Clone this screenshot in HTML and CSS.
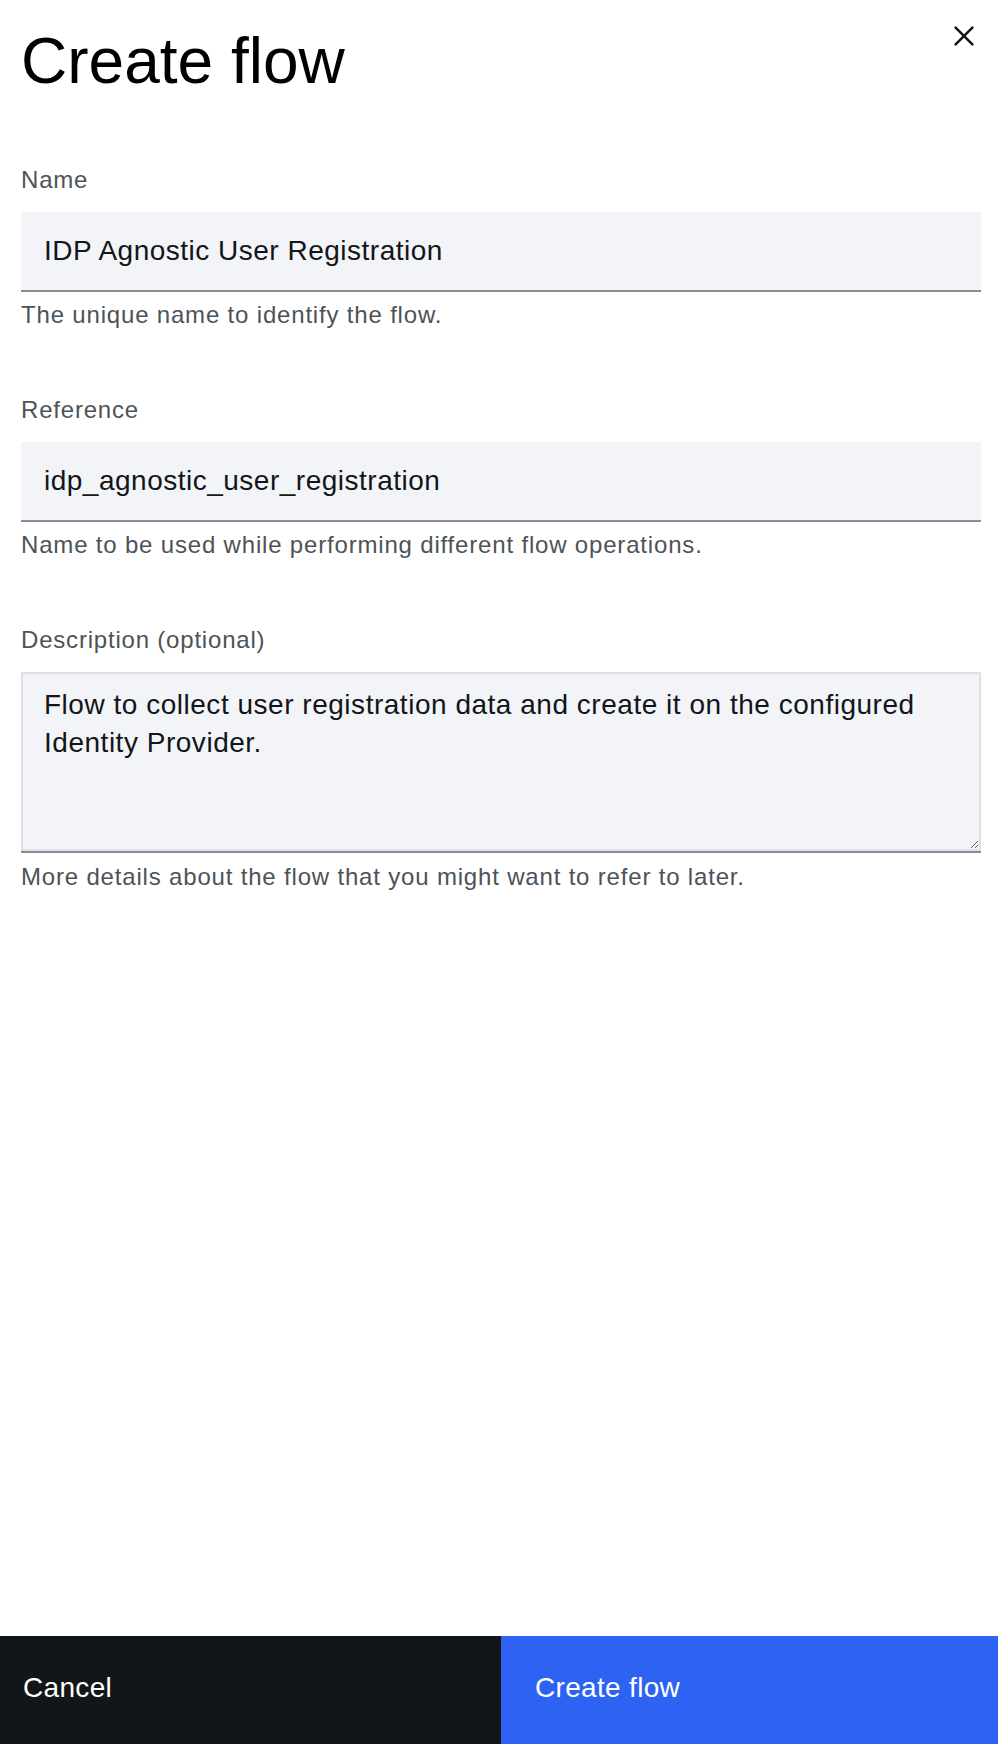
FILE: index.html
```html
<!DOCTYPE html>
<html lang="en">
<head>
<meta charset="utf-8">
<title>Create flow</title>
<link rel="stylesheet" href="styles.css">
</head>
<body>
<div class="panel">
  <div class="content">
    <header class="header">
      <h1 class="title">Create flow</h1>
      <button class="close" type="button" aria-label="Close">
        <svg width="40" height="40" viewBox="0 0 32 32" aria-hidden="true"><path fill="#121619" d="M17.4141 16L24 9.4141 22.5859 8 16 14.5859 9.4143 8 8 9.4141 14.5859 16 8 22.5859 9.4143 24 16 17.4141 22.5859 24 24 22.5859 17.4141 16z"/></svg>
      </button>
    </header>
    <form class="form">
      <div class="group">
        <label class="label" for="name">Name</label>
        <input class="field" id="name" type="text" value="IDP Agnostic User Registration">
        <div class="helper">The unique name to identify the flow.</div>
      </div>
      <div class="group">
        <label class="label" for="ref">Reference</label>
        <input class="field" id="ref" type="text" value="idp_agnostic_user_registration">
        <div class="helper">Name to be used while performing different flow operations.</div>
      </div>
      <div class="group">
        <label class="label" for="desc">Description (optional)</label>
        <div class="area-wrap">
          <textarea class="area" id="desc">Flow to collect user registration data and create it on the configured Identity Provider.</textarea>
        </div>
        <div class="helper helper-area">More details about the flow that you might want to refer to later.</div>
      </div>
    </form>
  </div>
  <footer class="footer">
    <button class="btn btn-secondary" type="button"><span>Cancel</span></button>
    <button class="btn btn-primary" type="button"><span>Create flow</span></button>
  </footer>
</div>
</body>
</html>
```
FILE: styles.css
```css
* { box-sizing: border-box; }
html, body { margin: 0; padding: 0; background: #ffffff; }
body {
  font-family: "Liberation Sans", Arial, sans-serif;
  color: #121619;
}
.panel {
  height: 1744px;
  display: flex;
  flex-direction: column;
}
.content {
  flex: 1;
  padding: 21px 17px 0 21px;
}
.header {
  display: flex;
  justify-content: space-between;
  align-items: flex-start;
}
.title {
  margin: 0;
  font-size: 64px;
  line-height: 80px;
  font-weight: 400;
  color: #000000;
  letter-spacing: 0;
}
.close {
  width: 40px;
  height: 40px;
  margin: -5px -3px 0 0;
  padding: 0;
  border: 0;
  background: transparent;
  display: flex;
}
.form {
  margin-top: 63px;
}
.group {
  display: flex;
  flex-direction: column;
  margin-bottom: 63px;
}
.label {
  font-size: 24px;
  line-height: 32px;
  letter-spacing: 0.8px;
  color: #4d5358;
  margin-bottom: 16px;
}
.field {
  display: block;
  width: 100%;
  height: 80px;
  margin: 0;
  padding: 0 23px;
  border: 0;
  border-bottom: 2px solid #878d96;
  background: #f2f4f8;
  font-family: "Liberation Sans", Arial, sans-serif;
  font-size: 28px;
  letter-spacing: 0.5px;
  color: #121619;
  outline: none;
}
.helper {
  margin-top: 7px;
  font-size: 24px;
  line-height: 32px;
  letter-spacing: 0.82px;
  color: #4d5358;
}
.helper-area { margin-top: 8px; }
.area-wrap {
  border-bottom: 2px solid #878d96;
}
.area {
  display: block;
  width: 100%;
  height: 179px;
  margin: 0;
  padding: 12px 19px 0 21px;
  border: 2px solid #dde1e6;
  background: #f2f4f8;
  font-family: "Liberation Sans", Arial, sans-serif;
  font-size: 28px;
  line-height: 37.7px;
  letter-spacing: 0.52px;
  color: #121619;
  outline: none;
  resize: vertical;
}
.footer {
  display: flex;
  height: 108px;
}
.btn {
  margin: 0;
  border: 0;
  display: flex;
  align-items: flex-start;
  justify-content: flex-start;
  height: 108px;
  padding: 32px 0 0 0;
  font-family: "Liberation Sans", Arial, sans-serif;
  font-size: 28px;
  line-height: 40px;
  letter-spacing: 0.32px;
  color: #ffffff;
  cursor: pointer;
}
.btn span { display: block; }
.btn-secondary {
  width: 501px;
  background: #121619;
  padding-left: 23px;
}
.btn-primary {
  flex: 1;
  background: #2e62f3;
  padding-left: 34px;
}
```
